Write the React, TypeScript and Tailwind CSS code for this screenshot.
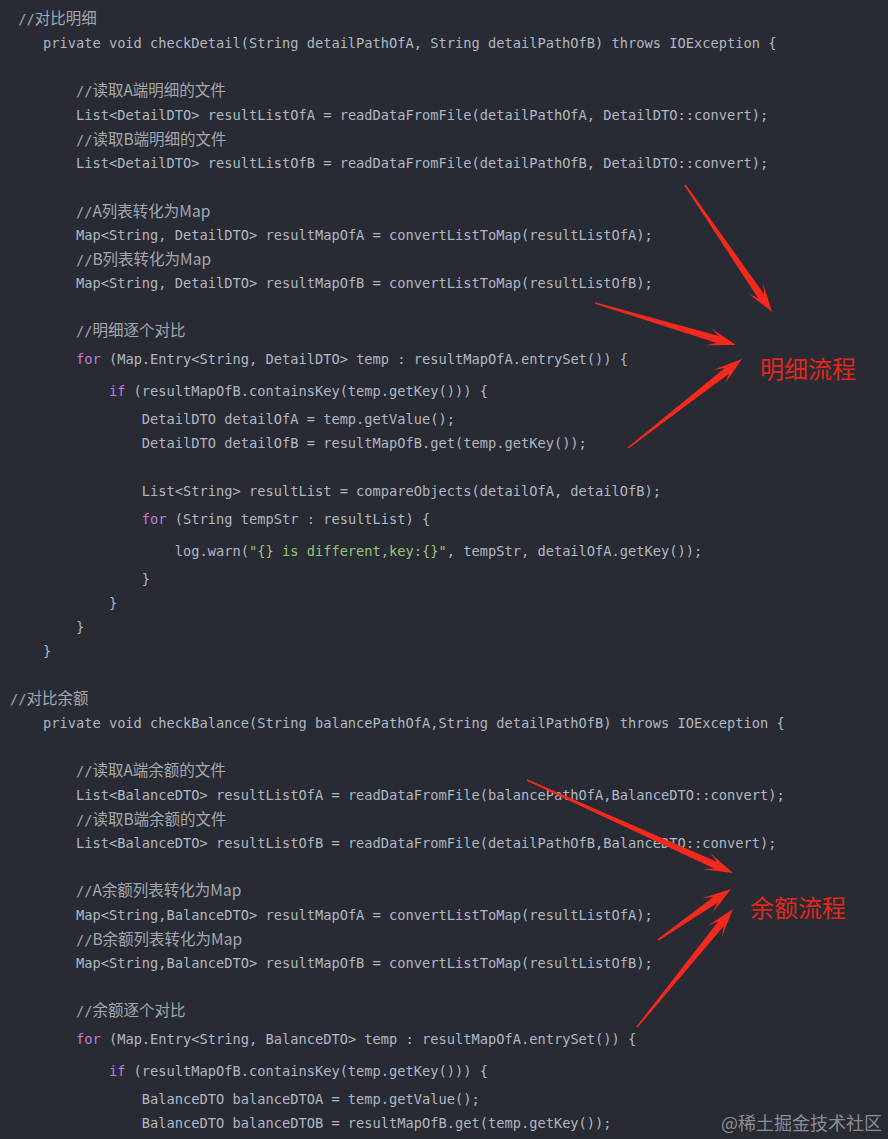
import React from "react";

type SegType = "p" | "k" | "s" | "c";
type Seg = [string, SegType];
type Line = { indent: number; mt: string; segs: Seg[] };

const L = (indent: number, mt: string, segs: Seg[]): Line => ({ indent, mt, segs });

const lines: Line[] = [
  L(1, "mt-0", [["//对比明细", "c"]]),
  L(4, "mt-px", [["private void checkDetail(String detailPathOfA, String detailPathOfB) throws IOException {", "p"]]),
  L(8, "mt-[23px]", [["//读取A端明细的文件", "c"]]),
  L(8, "mt-px", [["List<DetailDTO> resultListOfA = readDataFromFile(detailPathOfA, DetailDTO::convert);", "p"]]),
  L(8, "mt-0", [["//读取B端明细的文件", "c"]]),
  L(8, "mt-0", [["List<DetailDTO> resultListOfB = readDataFromFile(detailPathOfB, DetailDTO::convert);", "p"]]),
  L(8, "mt-6", [["//A列表转化为Map", "c"]]),
  L(8, "mt-0", [["Map<String, DetailDTO> resultMapOfA = convertListToMap(resultListOfA);", "p"]]),
  L(8, "mt-0", [["//B列表转化为Map", "c"]]),
  L(8, "mt-0", [["Map<String, DetailDTO> resultMapOfB = convertListToMap(resultListOfB);", "p"]]),
  L(8, "mt-[23px]", [["//明细逐个对比", "c"]]),
  L(8, "mt-[5px]", [["for", "k"], [" (Map.Entry<String, DetailDTO> temp : resultMapOfA.entrySet()) {", "p"]]),
  L(12, "mt-2", [["if", "k"], [" (resultMapOfB.containsKey(temp.getKey())) {", "p"]]),
  L(16, "mt-1", [["DetailDTO detailOfA = temp.getValue();", "p"]]),
  L(16, "mt-0", [["DetailDTO detailOfB = resultMapOfB.get(temp.getKey());", "p"]]),
  L(16, "mt-6", [["List<String> resultList = compareObjects(detailOfA, detailOfB);", "p"]]),
  L(16, "mt-1", [["for", "k"], [" (String tempStr : resultList) {", "p"]]),
  L(20, "mt-2", [["log.warn(", "p"], ["\"{} is different,key:{}\"", "s"], [", tempStr, detailOfA.getKey());", "p"]]),
  L(16, "mt-1", [["}", "p"]]),
  L(12, "mt-0", [["}", "p"]]),
  L(8, "mt-0", [["}", "p"]]),
  L(4, "mt-0", [["}", "p"]]),
  L(0, "mt-[23px]", [["//对比余额", "c"]]),
  L(4, "mt-px", [["private void checkBalance(String balancePathOfA,String detailPathOfB) throws IOException {", "p"]]),
  L(8, "mt-[23px]", [["//读取A端余额的文件", "c"]]),
  L(8, "mt-px", [["List<BalanceDTO> resultListOfA = readDataFromFile(balancePathOfA,BalanceDTO::convert);", "p"]]),
  L(8, "mt-0", [["//读取B端余额的文件", "c"]]),
  L(8, "mt-0", [["List<BalanceDTO> resultListOfB = readDataFromFile(detailPathOfB,BalanceDTO::convert);", "p"]]),
  L(8, "mt-[23px]", [["//A余额列表转化为Map", "c"]]),
  L(8, "mt-px", [["Map<String,BalanceDTO> resultMapOfA = convertListToMap(resultListOfA);", "p"]]),
  L(8, "mt-0", [["//B余额列表转化为Map", "c"]]),
  L(8, "mt-0", [["Map<String,BalanceDTO> resultMapOfB = convertListToMap(resultListOfB);", "p"]]),
  L(8, "mt-[23px]", [["//余额逐个对比", "c"]]),
  L(8, "mt-[5px]", [["for", "k"], [" (Map.Entry<String, BalanceDTO> temp : resultMapOfA.entrySet()) {", "p"]]),
  L(12, "mt-2", [["if", "k"], [" (resultMapOfB.containsKey(temp.getKey())) {", "p"]]),
  L(16, "mt-1", [["BalanceDTO balanceDTOA = temp.getValue();", "p"]]),
  L(16, "mt-0", [["BalanceDTO balanceDTOB = resultMapOfB.get(temp.getKey());", "p"]]),
];

function SegView({ seg }: { seg: Seg }) {
  const [text, type] = seg;
  if (type === "k") return <span className="text-[#c678dd]">{text}</span>;
  if (type === "s") return <span className="text-[#98c379]">{text}</span>;
  if (type === "c") {
    return (
      <span className="text-[#a3a8b0]">
        <span>//</span>
        <span className="font-['Noto_Sans_CJK_SC','Noto_Sans',sans-serif] text-[15.5px]">{text.slice(2)}</span>
      </span>
    );
  }
  return <span>{text}</span>;
}

function arrowPoints(tx: number, ty: number, px: number, py: number) {
  const dx = px - tx;
  const dy = py - ty;
  const len = Math.hypot(dx, dy);
  const ux = dx / len;
  const uy = dy / len;
  const nx = -uy;
  const ny = ux;
  const at = (d: number, w: number) => [px - ux * d + nx * w, py - uy * d + ny * w];
  const pts = [
    [tx + nx * 0.8, ty + ny * 0.8],
    at(19, 3.6),
    at(29, 9),
    [px, py],
    at(29, -9),
    at(19, -3.6),
    [tx - nx * 0.8, ty - ny * 0.8],
  ];
  return pts.map((p) => `${p[0].toFixed(1)},${p[1].toFixed(1)}`).join(" ");
}

const arrows: [number, number, number, number][] = [
  [685, 185, 772, 312],
  [595, 303, 736, 345],
  [628, 448, 742, 359],
  [527, 780, 733, 873],
  [658, 940, 731, 889],
  [637, 1027, 733, 909],
];

export default function App() {
  return (
    <div className="relative w-[888px] h-[1139px] overflow-hidden bg-[#282b33]">
      <div className="pl-[10px] pt-[6px] font-['DejaVu_Sans_Mono','Liberation_Mono',monospace] text-[13.7px] text-[#b0b7c3]">
        {lines.map((ln, i) => (
          <div key={i} className={`h-6 flex items-center whitespace-pre ${ln.mt}`}>
            <span>{" ".repeat(ln.indent)}</span>
            {ln.segs.map((s, j) => (
              <SegView key={j} seg={s} />
            ))}
          </div>
        ))}
      </div>

      <svg className="absolute left-0 top-0" width="888" height="1139" viewBox="0 0 888 1139">
        {arrows.map((a, i) => (
          <polygon key={i} points={arrowPoints(a[0], a[1], a[2], a[3])} fill="#f4291d" />
        ))}
      </svg>

      <div className="absolute left-[760px] top-[352px] leading-[32px] text-[24px] text-[#e0281d] font-['Noto_Sans_CJK_SC','Noto_Sans',sans-serif]">
        明细流程
      </div>
      <div className="absolute left-[750px] top-[891px] leading-[32px] text-[24px] text-[#e0281d] font-['Noto_Sans_CJK_SC','Noto_Sans',sans-serif]">
        余额流程
      </div>
      <div className="absolute left-[721px] top-[1110px] leading-[24px] text-[18px] text-[#8b8e94] font-['Noto_Sans_CJK_SC','Noto_Sans',sans-serif]">
        @稀土掘金技术社区
      </div>
    </div>
  );
}
